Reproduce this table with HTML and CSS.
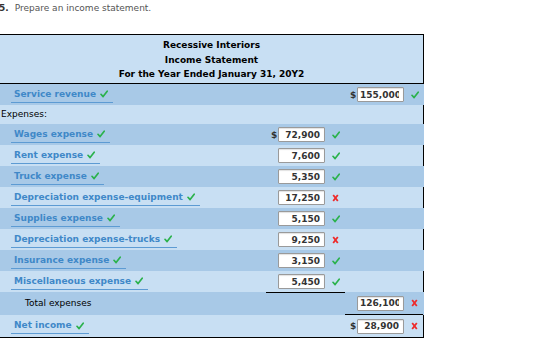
FILE: index.html
```html
<!DOCTYPE html>
<html>
<head>
<meta charset="utf-8">
<link rel="stylesheet" href="styles.css">
</head>
<body>
<p class="prompt"><b class="num">5.</b>Prepare an income statement.</p>
<div class="stmt">
  <div class="head">
    <div>Recessive Interiors</div>
    <div>Income Statement</div>
    <div>For the Year Ended January 31, 20Y2</div>
  </div>

  <div class="row dark">
    <div class="lab"><span class="acct">Service revenue <svg class="ok" viewBox="0 0 8 8"><path d="M1 4.3 L3.1 6.6 L7.2 1.2"/></svg></span></div>
    <div class="amt"></div>
    <div class="amt"><span class="cur">$</span><input readonly value="155,000"><svg class="ok" viewBox="0 0 8 8"><path d="M1 4.3 L3.1 6.6 L7.2 1.2"/></svg></div>
  </div>

  <div class="row light short">
    <div class="lab plain">Expenses:</div>
    <div class="amt"></div>
    <div class="amt"></div>
  </div>

  <div class="row dark">
    <div class="lab"><span class="acct">Wages expense <svg class="ok" viewBox="0 0 8 8"><path d="M1 4.3 L3.1 6.6 L7.2 1.2"/></svg></span></div>
    <div class="amt"><span class="cur">$</span><input readonly value="72,900"><svg class="ok" viewBox="0 0 8 8"><path d="M1 4.3 L3.1 6.6 L7.2 1.2"/></svg></div>
    <div class="amt"></div>
  </div>

  <div class="row light">
    <div class="lab"><span class="acct">Rent expense <svg class="ok" viewBox="0 0 8 8"><path d="M1 4.3 L3.1 6.6 L7.2 1.2"/></svg></span></div>
    <div class="amt"><span class="cur"></span><input readonly value="7,600"><svg class="ok" viewBox="0 0 8 8"><path d="M1 4.3 L3.1 6.6 L7.2 1.2"/></svg></div>
    <div class="amt"></div>
  </div>

  <div class="row dark">
    <div class="lab"><span class="acct">Truck expense <svg class="ok" viewBox="0 0 8 8"><path d="M1 4.3 L3.1 6.6 L7.2 1.2"/></svg></span></div>
    <div class="amt"><span class="cur"></span><input readonly value="5,350"><svg class="ok" viewBox="0 0 8 8"><path d="M1 4.3 L3.1 6.6 L7.2 1.2"/></svg></div>
    <div class="amt"></div>
  </div>

  <div class="row light">
    <div class="lab"><span class="acct">Depreciation expense-equipment <svg class="ok" viewBox="0 0 8 8"><path d="M1 4.3 L3.1 6.6 L7.2 1.2"/></svg></span></div>
    <div class="amt"><span class="cur"></span><input readonly value="17,250"><svg class="bad" viewBox="0 0 7 8"><path d="M1.2 1 L5.8 7 M5.8 1 L1.2 7"/></svg></div>
    <div class="amt"></div>
  </div>

  <div class="row dark">
    <div class="lab"><span class="acct">Supplies expense <svg class="ok" viewBox="0 0 8 8"><path d="M1 4.3 L3.1 6.6 L7.2 1.2"/></svg></span></div>
    <div class="amt"><span class="cur"></span><input readonly value="5,150"><svg class="ok" viewBox="0 0 8 8"><path d="M1 4.3 L3.1 6.6 L7.2 1.2"/></svg></div>
    <div class="amt"></div>
  </div>

  <div class="row light">
    <div class="lab"><span class="acct">Depreciation expense-trucks <svg class="ok" viewBox="0 0 8 8"><path d="M1 4.3 L3.1 6.6 L7.2 1.2"/></svg></span></div>
    <div class="amt"><span class="cur"></span><input readonly value="9,250"><svg class="bad" viewBox="0 0 7 8"><path d="M1.2 1 L5.8 7 M5.8 1 L1.2 7"/></svg></div>
    <div class="amt"></div>
  </div>

  <div class="row dark">
    <div class="lab"><span class="acct">Insurance expense <svg class="ok" viewBox="0 0 8 8"><path d="M1 4.3 L3.1 6.6 L7.2 1.2"/></svg></span></div>
    <div class="amt"><span class="cur"></span><input readonly value="3,150"><svg class="ok" viewBox="0 0 8 8"><path d="M1 4.3 L3.1 6.6 L7.2 1.2"/></svg></div>
    <div class="amt"></div>
  </div>

  <div class="row light">
    <div class="lab"><span class="acct">Miscellaneous expense <svg class="ok" viewBox="0 0 8 8"><path d="M1 4.3 L3.1 6.6 L7.2 1.2"/></svg></span></div>
    <div class="amt"><span class="cur"></span><input readonly value="5,450"><svg class="ok" viewBox="0 0 8 8"><path d="M1 4.3 L3.1 6.6 L7.2 1.2"/></svg></div>
    <div class="amt"></div>
  </div>

  <div class="row dark total">
    <div class="lab plain indent">Total expenses</div>
    <div class="amt rule-top"></div>
    <div class="amt rule-bottom"><span class="cur"></span><input readonly value="126,100"><svg class="bad" viewBox="0 0 7 8"><path d="M1.2 1 L5.8 7 M5.8 1 L1.2 7"/></svg></div>
  </div>

  <div class="row light last">
    <div class="lab"><span class="acct">Net income <svg class="ok" viewBox="0 0 8 8"><path d="M1 4.3 L3.1 6.6 L7.2 1.2"/></svg></span></div>
    <div class="amt"></div>
    <div class="amt"><span class="cur">$</span><input readonly value="28,900"><svg class="bad" viewBox="0 0 7 8"><path d="M1.2 1 L5.8 7 M5.8 1 L1.2 7"/></svg></div>
  </div>
</div>
</body>
</html>
```

FILE: styles.css
```css
html, body {
  margin: 0;
  padding: 0;
  background: #fff;
}

body {
  font-family: "DejaVu Sans", Verdana, sans-serif;
  font-size: 9px;
  color: #000;
}

.prompt {
  margin: 0;
  padding-top: 3px;
  height: 34px;
  box-sizing: border-box;
  line-height: 11px;
  color: #555;
  white-space: nowrap;
}

.prompt .num {
  color: #333;
  margin-left: -1px;
  margin-right: 6px;
}

.stmt {
  width: 424px;
}

.head {
  box-sizing: border-box;
  height: 50px;
  padding-top: 3px;
  border-top: 1px solid #000;
  border-bottom: 1px solid #000;
  border-right: 1px solid #000;
  background: #c8dff3;
  text-align: center;
  font-weight: bold;
  line-height: 14.5px;
}

.row {
  box-sizing: border-box;
  display: grid;
  grid-template-columns: 266px 79px 1fr;
  height: 21px;
  border-right: 1px solid #000;
}

.row.light {
  background: #c8dff3;
}

.row.dark {
  background: #a8c9e7;
  border-right-color: #a8c9e7;
}

.row.short {
  height: 19px;
}

.row.total {
  height: 23px;
}

.row.last {
  height: 23px;
  border-bottom: 1px solid #000;
}

.lab {
  display: flex;
  align-items: center;
}

.lab.plain {
  padding-left: 1px;
  padding-bottom: 1px;
}

.lab.indent {
  padding-left: 25px;
}

.acct {
  margin-left: 11px;
  padding: 2px 5px 2px 3px;
  line-height: 11px;
  border-bottom: 1px solid #5d9bd3;
  color: #3f88c8;
  font-weight: bold;
  white-space: nowrap;
  display: inline-flex;
  align-items: center;
}

.acct .ok {
  margin-left: 4px;
}

.amt {
  box-sizing: border-box;
  display: flex;
  align-items: center;
  padding-left: 5px;
}

.amt.rule-top {
  border-top: 1px solid #000;
}

.amt.rule-bottom {
  border-bottom: 1px solid #000;
}

.cur {
  width: 7px;
  color: #333;
  font-weight: bold;
  font-size: 9px;
}

.amt input {
  box-sizing: border-box;
  width: 47px;
  height: 15px;
  margin: 0;
  padding: 0 4px 0 2px;
  border: 1px solid #9a9a9a;
  border-radius: 1px;
  box-shadow: inset 0 1px 1px rgba(0, 0, 0, 0.12);
  background: #fff;
  font-family: "DejaVu Sans", Verdana, sans-serif;
  font-size: 9px;
  font-weight: bold;
  color: #333;
  text-align: right;
  outline: none;
}

.amt .ok,
.amt .bad {
  margin-left: 7px;
}

.ok {
  width: 8px;
  height: 8px;
  fill: none;
  stroke: #2bb24c;
  stroke-width: 1.7;
  stroke-linecap: round;
  stroke-linejoin: round;
}

.bad {
  width: 7px;
  height: 8px;
  fill: none;
  stroke: #ee2a2a;
  stroke-width: 1.8;
}
```
